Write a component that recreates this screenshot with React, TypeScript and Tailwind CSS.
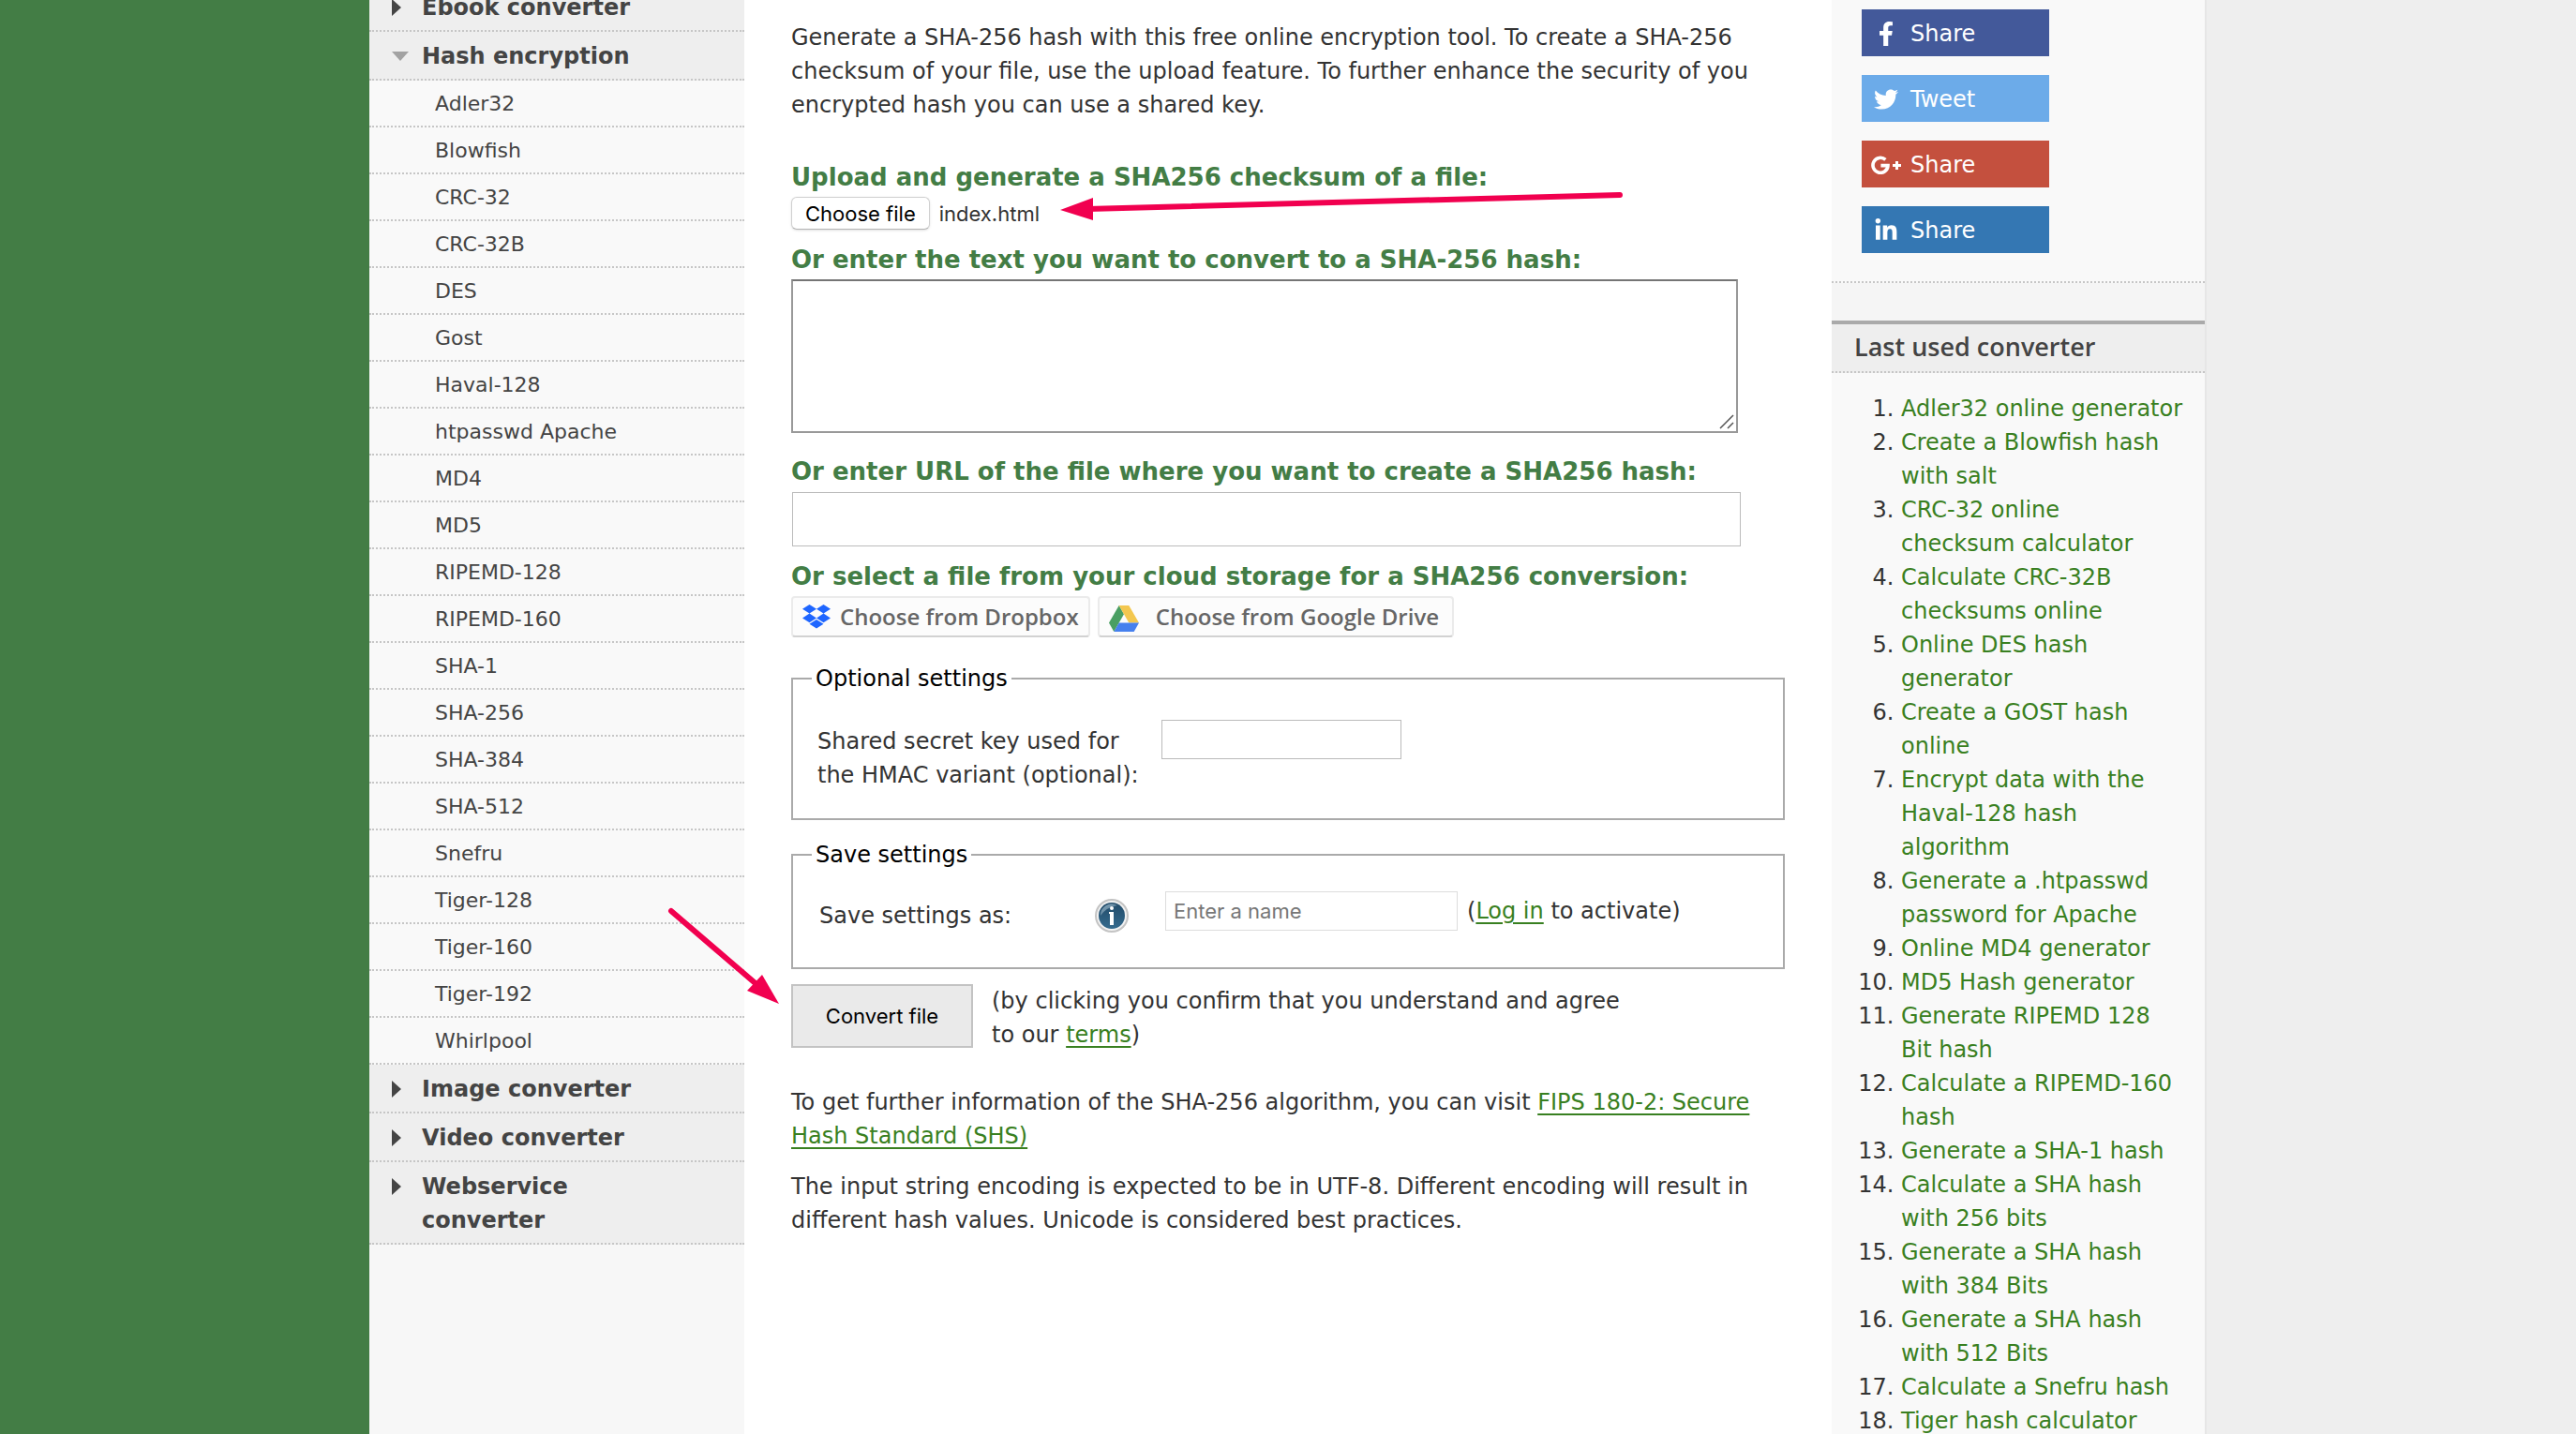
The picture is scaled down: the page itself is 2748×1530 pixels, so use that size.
import React, { useState } from "react";
import type { ReactNode } from "react";
import { FaFacebookF, FaTwitter, FaLinkedinIn } from "react-icons/fa";

const hashes = [
  "Adler32", "Blowfish", "CRC-32", "CRC-32B", "DES", "Gost", "Haval-128",
  "htpasswd Apache", "MD4", "MD5", "RIPEMD-128", "RIPEMD-160", "SHA-1",
  "SHA-256", "SHA-384", "SHA-512", "Snefru", "Tiger-128", "Tiger-160",
  "Tiger-192", "Whirlpool",
];

const lastUsed = [
  "Adler32 online generator",
  "Create a Blowfish hash with salt",
  "CRC-32 online\nchecksum calculator",
  "Calculate CRC-32B checksums online",
  "Online DES hash generator",
  "Create a GOST hash online",
  "Encrypt data with the Haval-128 hash algorithm",
  "Generate a .htpasswd password for Apache",
  "Online MD4 generator",
  "MD5 Hash generator",
  "Generate RIPEMD 128 Bit hash",
  "Calculate a RIPEMD-160 hash",
  "Generate a SHA-1 hash",
  "Calculate a SHA hash with 256 bits",
  "Generate a SHA hash with 384 Bits",
  "Generate a SHA hash with 512 Bits",
  "Calculate a Snefru hash",
  "Tiger hash calculator",
];

function Category({ children, open = false }: { children: ReactNode; open?: boolean }) {
  return (
    <a
      href="#"
      className="flex border-b-2 border-dotted border-[#c6c6c6] bg-[#eeeeee] pt-2 pr-20 pb-1.5 pl-6 text-[24px] leading-9 font-bold text-[#444444]"
    >
      <span className="flex h-9 w-8 shrink-0 items-center">
        {open ? (
          <svg width="18" height="10" viewBox="0 0 18 10" aria-hidden="true">
            <path d="M0 0H18L9 10Z" fill="#a2a2a2" />
          </svg>
        ) : (
          <svg width="10" height="18" viewBox="0 0 10 18" aria-hidden="true">
            <path d="M0 0V18L10 9Z" fill="#444444" />
          </svg>
        )}
      </span>
      {children}
    </a>
  );
}

function Sidebar() {
  return (
    <nav className="w-[400px] shrink-0 bg-[#f7f7f7]">
      <div className="-mt-[18px]">
        <Category>Ebook converter</Category>
        <Category open>Hash encryption</Category>
        <ul>
          {hashes.map((name) => (
            <li key={name} className="border-b-2 border-dotted border-[#c6c6c6] bg-[#f9f9f9]">
              <a href="#" className="block pt-0.5 pl-[70px] text-[22px] leading-[46px] text-[#444444]">
                {name}
              </a>
            </li>
          ))}
        </ul>
        <Category>Image converter</Category>
        <Category>Video converter</Category>
        <Category>Webservice converter</Category>
      </div>
    </nav>
  );
}

function GooglePlusIcon() {
  return (
    <svg width="32" height="20" viewBox="0 0 32 20" fill="none" stroke="#ffffff" aria-hidden="true">
      <path d="M15.4 4.4A8 8 0 1 0 18 10.6H10.4" strokeWidth="3.6" />
      <path d="M27.5 6V15M23 10.5H32" strokeWidth="3" />
    </svg>
  );
}

function ShareButton({ color, icon, children }: { color: string; icon: ReactNode; children: ReactNode }) {
  return (
    <button type="button" className={`flex h-[50px] w-[200px] items-center pt-0.5 pl-2.5 text-white ${color}`}>
      <span className="flex w-8 justify-center">{icon}</span>
      <span className="pl-2.5 text-[24px] leading-9">{children}</span>
    </button>
  );
}

function Aside() {
  return (
    <aside className="w-[400px] shrink-0 border-r-2 border-[#e6e6e6] bg-[#f5f5f5]">
      <div className="flex flex-col gap-5 border-b-2 border-dotted border-[#c6c6c6] bg-[#f9f9f9] px-8 pt-2.5 pb-[30px]">
        <ShareButton color="bg-[#43599a]" icon={<FaFacebookF size={26} />}>Share</ShareButton>
        <ShareButton color="bg-[#6cabe9]" icon={<FaTwitter size={26} />}>Tweet</ShareButton>
        <ShareButton color="bg-[#c4503e]" icon={<GooglePlusIcon />}>Share</ShareButton>
        <ShareButton color="bg-[#3477b3]" icon={<FaLinkedinIn size={26} />}>Share</ShareButton>
      </div>
      <div className="mt-10 border-t-4 border-[#aaaaaa] bg-[#f9f9f9]">
        <h2 className="border-b-2 border-dotted border-[#c6c6c6] bg-[#eeeeee] pb-0.5 pl-6 font-['Open_Sans',sans-serif] text-[27px] leading-[48px] font-semibold text-[#444444]">
          Last used converter
        </h2>
        <ol className="list-decimal pt-5 pr-5 pl-[74px] text-[24px] leading-9 text-[#333333]">
          {lastUsed.map((name) => (
            <li key={name}>
              <a href="#" className="whitespace-pre-line text-[#398021]">{name}</a>
            </li>
          ))}
        </ol>
      </div>
    </aside>
  );
}

function DropboxIcon() {
  return (
    <svg width="30" height="26" viewBox="0 0 30 26" fill="#1f66ff" aria-hidden="true">
      <path d="M7.5 0L15 4.8L7.5 9.6L0 4.8ZM22.5 0L30 4.8L22.5 9.6L15 4.8ZM7.5 9.6L15 14.4L7.5 19.2L0 14.4ZM22.5 9.6L30 14.4L22.5 19.2L15 14.4ZM15 16L22.5 20.8L15 25.6L7.5 20.8Z" />
    </svg>
  );
}

function DriveIcon() {
  return (
    <svg className="mt-1" width="32" height="28" viewBox="0 0 32 28" aria-hidden="true">
      <path d="M10.7 0L16 9.3L5.3 28L0 18.6Z" fill="#4a9f63" />
      <path d="M10.7 0H21.3L32 18.6H21.3Z" fill="#f3c74f" />
      <path d="M10.7 18.6H32L26.7 28H5.3Z" fill="#4680ee" />
    </svg>
  );
}

function InfoIcon() {
  return (
    <svg width="36" height="36" viewBox="0 0 36 36" role="img" aria-label="Information">
      <defs>
        <linearGradient id="info" x1="0" y1="0" x2="0" y2="1">
          <stop offset="0" stopColor="#214a68" />
          <stop offset="1" stopColor="#356b8e" />
        </linearGradient>
        <linearGradient id="shine" x1="0" y1="0" x2="1" y2="1">
          <stop offset="0" stopColor="#8fadc0" />
          <stop offset="1" stopColor="#3a6482" />
        </linearGradient>
      </defs>
      <circle cx="18" cy="18" r="17" fill="#f2f2f2" stroke="#c4c4c4" strokeWidth="2" />
      <circle cx="18" cy="18" r="14" fill="url(#info)" />
      <path d="M6 18A12 12 0 0 1 24 7Q12 9 6 18Z" fill="url(#shine)" />
      <circle cx="18" cy="10" r="2" fill="#ffffff" />
      <path d="M15 14H20V28H16V16H15Z" fill="#ffffff" />
    </svg>
  );
}

const heading = "text-[26px] leading-9 font-bold text-[#437d45]";
const link = "text-[#398021] underline underline-offset-4";
const cloudButton =
  "flex h-11 items-center rounded border-2 border-[#ebebeb] border-b-[#d2d2d2] bg-[#fcfcfc] font-['Open_Sans',sans-serif] text-[24px] font-semibold text-[#666666]";

function Arrows() {
  return (
    <svg
      className="pointer-events-none absolute top-[200px] left-[-94px]"
      width="1050"
      height="880"
      viewBox="700 200 1050 880"
      fill="#f1004f"
      stroke="#f1004f"
      aria-hidden="true"
    >
      <path d="M1728 208L1160 223" strokeWidth="6" strokeLinecap="round" />
      <path d="M1131 224L1166 211V235Z" stroke="none" />
      <path d="M716 972L808 1051" strokeWidth="6" strokeLinecap="round" />
      <path d="M831 1071L813 1040L797 1057Z" stroke="none" />
    </svg>
  );
}

function Converter() {
  const [fileName, setFileName] = useState("index.html");
  return (
    <main className="relative min-w-0 flex-1 bg-white pt-[22px] pr-[50px] pl-[50px] text-[24px] leading-9 text-[#333333]">
      <p>
        Generate a SHA-256 hash with this free online encryption tool. To create a SHA-256 checksum of your
        file, use the upload feature. To further enhance the security of you encrypted hash you can use a
        shared key.
      </p>
      <form onSubmit={(e) => e.preventDefault()}>
        <h2 className={`mt-[41px] ${heading}`}>Upload and generate a SHA256 checksum of a file:</h2>
        <div className="mt-[3px] flex items-center gap-2.5 font-['Inter',sans-serif] text-[22px] leading-[32px]">
          <label
            htmlFor="upload"
            className="rounded-md border border-[#d0d0d0] border-b-[#b4b4b4] bg-white px-3.5 pt-px text-black shadow-sm"
          >
            Choose file
          </label>
          <input
            id="upload"
            type="file"
            className="sr-only"
            onChange={(e) => setFileName(e.target.files?.[0]?.name ?? "")}
          />
          <span className="pt-px">{fileName}</span>
        </div>
        <label htmlFor="text" className={`mt-[14px] block ${heading}`}>
          Or enter the text you want to convert to a SHA-256 hash:
        </label>
        <div className="relative mt-[3px] max-w-[1010px]">
          <textarea
            id="text"
            className="block h-[164px] w-full resize-none border-2 border-[#999999] border-t-[#757575] bg-white"
          />
          <svg
            className="pointer-events-none absolute right-1 bottom-1"
            width="16"
            height="16"
            viewBox="0 0 16 16"
            stroke="#555555"
            strokeWidth="1.5"
            aria-hidden="true"
          >
            <path d="M1 15L15 1M9 15L15 9" />
          </svg>
        </div>
        <label htmlFor="url" className={`mt-[23px] block ${heading}`}>
          Or enter URL of the file where you want to create a SHA256 hash:
        </label>
        <input
          id="url"
          type="text"
          className="mt-1 ml-px block h-[58px] w-full max-w-[1012px] border border-[#bbbbbb] bg-white px-2"
        />
        <h2 className={`mt-[14px] ${heading}`}>Or select a file from your cloud storage for a SHA256 conversion:</h2>
        <div className="mt-[3px] flex gap-2">
          <button type="button" className={`gap-2.5 px-2.5 ${cloudButton}`}>
            <DropboxIcon />
            Choose from Dropbox
          </button>
          <button type="button" className={`gap-[18px] pr-3.5 pl-2.5 ${cloudButton}`}>
            <DriveIcon />
            Choose from Google Drive
          </button>
        </div>

        <fieldset className="mt-[26px] border-2 border-[#aaaaaa] px-[26px] pt-[26px] pb-[27px]">
          <legend className="-ml-1.5 px-1 text-black">Optional settings</legend>
          <div className="flex items-start">
            <label htmlFor="key" className="w-[367px] pt-[5px] pb-px">
              Shared secret key used for
              <br />
              the HMAC variant (optional):
            </label>
            <input id="key" type="text" className="h-[42px] w-64 border border-[#bbbbbb] bg-white px-2" />
          </div>
        </fieldset>

        <fieldset className="mt-[19px] border-2 border-[#aaaaaa] px-7 pt-[21px] pb-[37px]">
          <legend className="-ml-2 px-1 text-black">Save settings</legend>
          <div className="flex items-start">
            <label htmlFor="name" className="w-[294px] pt-2">Save settings as:</label>
            <span className="w-[75px] pt-2">
              <InfoIcon />
            </span>
            <input
              id="name"
              type="text"
              placeholder="Enter a name"
              className="h-[42px] w-[312px] border border-[#dddddd] bg-white px-2 font-['Inter',sans-serif] text-[22px] placeholder:text-[#777777]"
            />
            <span className="pt-[3px] pl-2.5">
              (<a href="#" className={link}>Log in</a> to activate)
            </span>
          </div>
        </fieldset>

        <div className="mt-4 flex gap-5">
          <button
            type="submit"
            className="h-[68px] w-[194px] border-2 border-[#c3c3c3] bg-[#eaeaea] font-['Inter',sans-serif] text-[22px] text-black"
          >
            Convert file
          </button>
          <p className="max-w-[690px]">
            (by clicking you confirm that you understand and agree to our{" "}
            <a href="#" className={link}>terms</a>)
          </p>
        </div>
      </form>
      <p className="mt-9">
        To get further information of the SHA-256 algorithm, you can visit{" "}
        <a href="#" className={link}>FIPS 180-2: Secure Hash Standard (SHS)</a>
      </p>
      <p className="mt-[18px]">
        The input string encoding is expected to be in UTF-8. Different encoding will result in different hash
        values. Unicode is considered best practices.
      </p>
      <Arrows />
    </main>
  );
}

export default function App() {
  return (
    <div className="flex min-h-screen overflow-hidden font-['DejaVu_Sans',Verdana,sans-serif]">
      <div className="flex-1 bg-[#437d45]" />
      <div className="flex w-full max-w-[1960px]">
        <Sidebar />
        <Converter />
        <Aside />
      </div>
      <div className="flex-1 bg-[#eeeeee]" />
    </div>
  );
}
